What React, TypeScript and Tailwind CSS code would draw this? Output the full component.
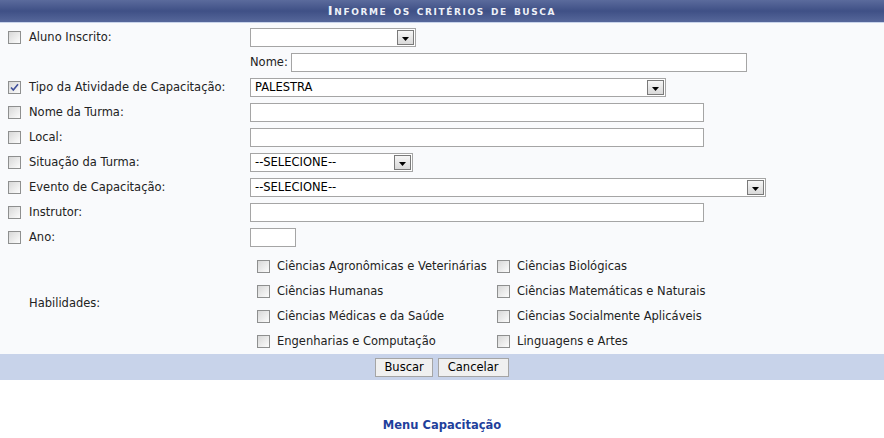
import React from 'react';

const Check: React.FC<{ checked?: boolean }> = ({ checked }) => (
    <span className="relative inline-flex w-[13px] h-[13px] border border-[#8e8f8f] bg-gradient-to-br from-[#d8d8d8] to-[#fcfcfc] items-center justify-center">
        {checked && (
            <svg width="9" height="9" viewBox="0 0 9 9">
                <path d="M1 4.5 L3.3 7 L8 1.2" fill="none" stroke="#3f4f9a" strokeWidth="1.6" />
            </svg>
        )}
    </span>
);

const Select: React.FC<{ w: string; text?: string }> = ({ w, text }) => (
    <div className={`flex items-stretch h-[19px] border border-[#a5a5a5] bg-white ${w}`}>
        <span className="flex-1 pl-[4px] leading-[17px] text-black">{text}</span>
        <span className="w-[17px] m-[1px] border border-[#7a7a7a] bg-gradient-to-b from-[#f6f6f6] to-[#d9d9d9] flex items-center justify-center">
            <svg width="7" height="4" viewBox="0 0 7 4" className="mt-[2px]">
                <path d="M0 0 H7 L3.5 4 Z" fill="#000" />
            </svg>
        </span>
    </div>
);

const Input: React.FC<{ w: string }> = ({ w }) => (
    <div className={`h-[19px] border border-[#a5a5a5] bg-white ${w}`} />
);

const Row: React.FC<{ label: string; checked?: boolean; children: React.ReactNode }> = ({ label, checked, children }) => (
    <div className="flex items-center h-[25px]">
        <div className="w-[29px] pl-[8px] flex items-center"><Check checked={checked} /></div>
        <div className="w-[221px]">{label}</div>
        <div>{children}</div>
    </div>
);

const areas = [
    ['Ciências Agronômicas e Veterinárias', 'Ciências Biológicas'],
    ['Ciências Humanas', 'Ciências Matemáticas e Naturais'],
    ['Ciências Médicas e da Saúde', 'Ciências Socialmente Aplicáveis'],
    ['Engenharias e Computação', 'Linguagens e Artes'],
];

export default function App() {
    return (
        <div className="w-[884px] h-[438px] bg-white font-['DejaVu_Sans',sans-serif] text-[11.5px] text-[#222]">
            <div className="h-[23px] bg-gradient-to-b from-[#5b6b9c] via-[#3f5086] to-[#56679a] border-b border-[#c8d3ea] flex items-center justify-center">
                <span className="text-[#eef1f8] font-bold text-[13px] tracking-[1.6px] [font-variant:small-caps]">Informe os critérios de busca</span>
            </div>
            <div className="bg-[#f9fafc] pt-[2px]">
                <Row label="Aluno Inscrito:"><Select w="w-[166px]" /></Row>
                <div className="flex items-center h-[25px] pl-[250px]">
                    <span className="mr-[3px]">Nome:</span>
                    <Input w="w-[456px]" />
                </div>
                <Row label="Tipo da Atividade de Capacitação:" checked><Select w="w-[416px]" text="PALESTRA" /></Row>
                <Row label="Nome da Turma:"><Input w="w-[454px]" /></Row>
                <Row label="Local:"><Input w="w-[454px]" /></Row>
                <Row label="Situação da Turma:"><Select w="w-[163px]" text="--SELECIONE--" /></Row>
                <Row label="Evento de Capacitação:"><Select w="w-[516px]" text="--SELECIONE--" /></Row>
                <Row label="Instrutor:"><Input w="w-[454px]" /></Row>
                <Row label="Ano:"><Input w="w-[46px]" /></Row>
                <div className="flex items-center pt-[4px]">
                    <div className="w-[250px] pl-[29px]">Habilidades:</div>
                    <div className="flex flex-col">
                        {areas.map(([a, b]) => (
                            <div key={a} className="flex items-center h-[25px]">
                                <div className="w-[240px] pl-[7px] flex items-center gap-[7px]"><Check /><span>{a}</span></div>
                                <div className="pl-[7px] flex items-center gap-[7px]"><Check /><span>{b}</span></div>
                            </div>
                        ))}
                    </div>
                </div>
            </div>
            <div className="h-[26px] bg-[#c8d3ea] flex items-center justify-center gap-[5px]">
                <button className="h-[19px] px-[8px] border border-[#a5a5a5] bg-[#f0f0f0] text-black leading-[17px]">Buscar</button>
                <button className="h-[19px] px-[9px] border border-[#a5a5a5] bg-[#f0f0f0] text-black leading-[17px]">Cancelar</button>
            </div>
            <div className="pt-[37px] text-center font-bold text-[#1f3f9c]">Menu Capacitação</div>
        </div>
    );
}
